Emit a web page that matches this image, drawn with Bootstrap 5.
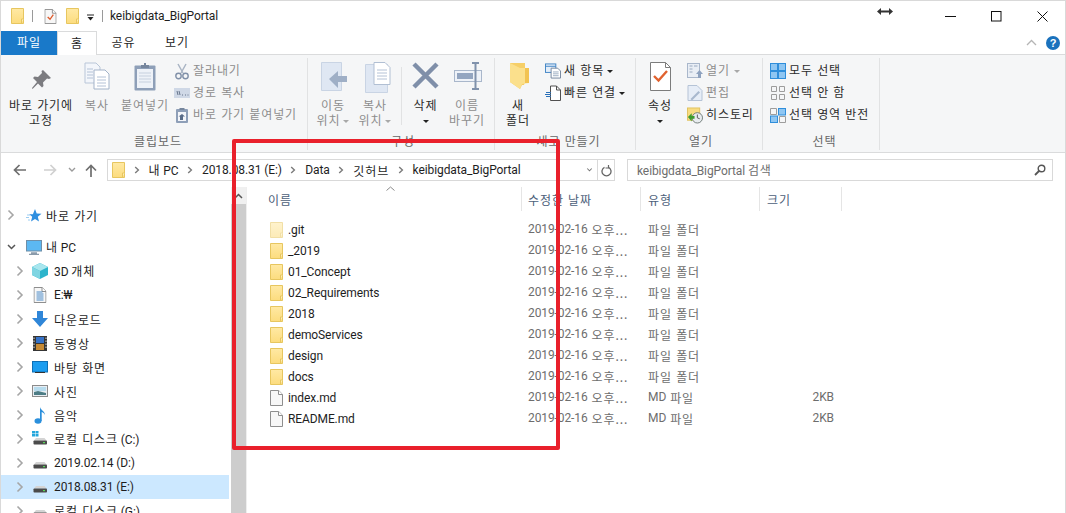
<!DOCTYPE html>
<html lang="ko">
<head>
  <meta charset="UTF-8" />
  <title>keibigdata_BigPortal</title>
  <link href="https://cdn.jsdelivr.net/npm/bootstrap@5.3.3/dist/css/bootstrap.min.css" rel="stylesheet">
  <style>
    html, body { height: 100%; overflow: hidden; background: #fff; }
    body { font-family: Roboto, "Noto Sans CJK KR", sans-serif; font-size: 12px; color: #1e1e1e; line-height: 15px; letter-spacing: -.1px; }
    svg { display: block; flex: none; }
    .ko { font-family: "Noto Sans CJK KR", sans-serif; letter-spacing: .9px; }
    .win { width: 1066px; height: 513px; border: solid #d9d9d9; border-width: 1px 1px 0 1px; overflow: hidden; }

    /* title bar */
    .titlebar { height: 30px; }
    .tb-sep { width: 1px; height: 12px; background: #9a9a9a; }
    .t-folder { margin-left: 10px; }
    .t-sep1 { margin-left: 8px; }
    .t-doc { margin-left: 11px; }
    .t-folder2 { margin-left: 9px; }
    .t-arrow { margin: 3px 0 0 7px; }
    .t-sep2 { margin-left: 7px; }
    .t-name { margin-left: 7px; }
    .win-btn { width: 46px; height: 30px; }
    .cursor-mark { left: 876px; top: 6px; }

    /* tabs */
    .tabs { height: 24px; border-bottom: 1px solid #dadbdc; font-size: 12px; }
    .rb-tab { height: 24px; padding-bottom: 3px; }
    .rb-tab.file { width: 56px; background: #1979c9; color: #fff; }
    .rb-tab.home { width: 40px; background: #fff; border: 1px solid #dadbdc; border-bottom: 0; height: 25px; }
    .rb-tab.share { width: 53px; }
    .rb-tab.view { width: 54px; }
    .tabs-right { margin-left: auto; padding-right: 5px; gap: 9px; }
    .help { width: 14px; height: 14px; border-radius: 50%; background: #1b72bd; color: #fff; font: bold 11px/14px "Liberation Sans", sans-serif; text-align: center; }

    /* ribbon */
    .ribbon { height: 98px; background: #f5f6f7; border-bottom: 1px solid #dadbdc; color: #8d8d8d; }
    .rb-group { height: 92px; margin-top: 3px; border-right: 1px solid #e1e2e3; }
    .g1 { width: 307px; padding-left: 8px; }
    .g2 { width: 187px; padding-left: 4px; }
    .g3 { width: 141px; padding-left: 7px; }
    .g4 { width: 127px; padding-left: 4px; }
    .g5 { width: 117px; padding-left: 7px; }
    .rb-body { height: 75px; }
    .rb-label { height: 17px; text-align: center; color: #666; }
    .big { text-align: center; }
    .big-icon { height: 39px; }
    .pin-ic { margin-bottom: 7px; }
    .w64 { width: 64px; } .w48 { width: 48px; } .w43 { width: 43px; } .w42 { width: 42px; } .w40 { width: 40px; } .w32 { width: 32px; }
    .nudge1 { margin-left: 2px; } .nudge2 { margin-left: 4px; } .nudge3 { margin-left: 6px; }
    .on { color: #2b2b2b; }
    .mini-col { padding-top: 2px; }
    .col-a { margin-left: 5px; }
    .col-b { margin-left: 11px; }
    .col-c { margin-left: 7px; }
    .mini { height: 22px; gap: 3px; white-space: nowrap; }
    .mini > span { margin-bottom: 4px; }
    .mini-ic { width: 16px; }
    .rb-vsep { width: 1px; height: 58px; background: #e1e2e3; margin: 9px 2px 0 5px; }
    .caret-s { display: inline-block; border: 3px solid transparent; border-top: 3px solid currentColor; border-bottom: 0; vertical-align: middle; margin-left: 3px; }
    .caret-k { color: #222; }
    .caret-g { color: #a8a8a8; }

    /* address bar */
    .addr { height: 34px; }
    .nav-ic { width: 106px; padding-left: 12px; }
    .nav-fwd { margin-left: 16px; }
    .nav-drop { margin-left: 11px; }
    .nav-up { margin-left: 9px; }
    .crumbs { width: 490px; height: 22px; border: 1px solid #d9d9d9; border-right: 0; padding-left: 4px; white-space: nowrap; }
    .crumb-gap { margin: 0 9px 0 8.5px; }
    .crumbs-end { margin-left: auto; padding-right: 3px; }
    .refresh { width: 18px; height: 22px; border: 1px solid #d9d9d9; }
    .search { width: 426px; height: 22px; margin-left: 12px; border: 1px solid #d9d9d9; padding: 0 6px 0 9px; color: #6d6d6d; }

    /* main */
    .main { height: 326px; }
    .side { width: 230px; padding-top: 16px; }
    .tree-row { height: 24px; margin-right: 2px; white-space: nowrap; }
    .tree-row.sel { background: #cce8ff; }
    .tree-gap { margin-top: 8px; }
    .lv0 { padding-left: 6px; }
    .lv1 { padding-left: 15px; }
    .tree-ic { width: 16px; margin: 0 6px 0 8px; }
    .lv0 .tree-ic { margin: 0 4px 0 11px; }
    .lv0 .tree-ic.pc { margin-left: 10px; }
    .scroll { width: 15px; background: #f0f0f0; }
    .scroll-up { height: 17px; }
    .scroll-thumb { background: #cdcdcd; }
    .files { border-left: 1px solid #eee; }
    .cols { display: grid; grid-template-columns: 275px 119px 119px 82px; }
    .heads { height: 24px; color: #4c607a; position: relative; }
    .hd { padding-left: 6px; border-right: 1px solid #e5e5e5; }
    .hd.name { padding-left: 21px; }
    .hd.wide { padding-left: 7px; }
    .sort-mark { left: 139px; top: -1px; }
    .file-list { margin-top: 8px; }
    .file-row { height: 21px; color: #6d6d6d; }
    .cell-name { padding-left: 23px; gap: 5px; color: #1e1e1e; }
    .cell-txt { padding-top: 1px; }
    .cell { padding-left: 6px; white-space: nowrap; }
    .cell-t { padding-left: 7px; white-space: nowrap; }
    .cell-size { padding-right: 8px; text-align: right; }
    .faded { opacity: .55; }

    .marker { left: 231px; top: 138px; width: 328px; height: 311px; border: 4px solid #e9202b; border-radius: 2px; pointer-events: none; }
  </style>
</head>
<body class="m-0">

<svg width="0" height="0" class="position-absolute">
  <defs>
    <linearGradient id="fold" x1="0" y1="0" x2="0" y2="1"><stop offset="0" stop-color="#ffe9a4"/><stop offset="1" stop-color="#fcdc7e"/></linearGradient>
    <symbol id="folder" viewBox="0 0 13 16"><path d="M.5.5h12v15H.5z" fill="url(#fold)" stroke="#e7c65f"/><path d="M10.500 15v-4h2" fill="#fff2c4" stroke="#e7c65f"/></symbol>
    <symbol id="doc" viewBox="0 0 13 16"><path d="M.5.5h8.200l3.800 3.800v11.200H.5z" fill="#f7f7f7" stroke="#8e8e8e"/><path d="M8.500.5v4h4" fill="#fff" stroke="#8e8e8e"/></symbol>
    <symbol id="chev" viewBox="0 0 8 12"><path d="M1.500 1.500 6 6l-4.500 4.500" fill="none" stroke="#a6a6a6" stroke-width="1.600"/></symbol>
    <symbol id="crumb" viewBox="0 0 6 8"><path d="M1.200 1 4.400 4 1.200 7" fill="none" stroke="#7b7b7b" stroke-width="1.400"/></symbol>
    <symbol id="drive" viewBox="0 0 16 16"><path d="M2 9.500 4 7h8.500l2 2.500z" fill="#d4d4d4"/><rect x="1.500" y="9.500" width="13.500" height="4" rx=".8" fill="#4b4b4b"/><rect x="11" y="11" width="2" height="1.200" fill="#55d957"/></symbol>
  </defs>
</svg>

<div class="win position-relative d-flex flex-column">

  <!-- title bar -->
  <div class="titlebar d-flex align-items-center">
    <svg class="t-folder" width="13" height="16" aria-hidden="true"><use href="#folder"/></svg>
    <div class="tb-sep t-sep1"></div>
    <svg class="t-doc" width="13" height="15" viewBox="0 0 13 16"><use href="#doc"/><path d="M3.500 8.500 6 11l3.500-5" fill="none" stroke="#dd5a2b" stroke-width="1.400"/></svg>
    <svg class="t-folder2" width="13" height="16"><use href="#folder"/></svg>
    <svg class="t-arrow" width="9" height="8" viewBox="0 0 9 8"><path d="M1 1h7" stroke="#222"/><path d="M1.500 3h6l-3 3.500z" fill="#222"/></svg>
    <div class="tb-sep t-sep2"></div>
    <div class="t-name">keibigdata_BigPortal</div>
    <div class="ms-auto d-flex">
      <div class="win-btn d-flex align-items-center justify-content-center"><svg width="11" height="1"><rect width="11" height="1" fill="#111"/></svg></div>
      <div class="win-btn d-flex align-items-center justify-content-center"><svg width="11" height="11"><rect x=".5" y=".5" width="9.500" height="9.500" fill="none" stroke="#111"/></svg></div>
      <div class="win-btn d-flex align-items-center justify-content-center"><svg width="11" height="11"><path d="M.5.5l10 10M10.500.5l-10 10" stroke="#111"/></svg></div>
    </div>
  </div>
  <svg class="cursor-mark position-absolute" width="16" height="9" viewBox="0 0 16 9"><path d="M0 4.500 4 1v2.500h8V1l4 3.500L12 8V5.500H4V8z" fill="#333"/></svg>

  <!-- tabs -->
  <div class="tabs d-flex">
    <div class="rb-tab file d-flex align-items-center justify-content-center ko">파일</div>
    <div class="rb-tab home d-flex align-items-center justify-content-center ko">홈</div>
    <div class="rb-tab share d-flex align-items-center justify-content-center ko">공유</div>
    <div class="rb-tab view d-flex align-items-center justify-content-center ko">보기</div>
    <div class="tabs-right d-flex align-items-center">
      <svg width="11" height="7" viewBox="0 0 11 7"><path d="M1 6l4.500-4.500L10 6" fill="none" stroke="#b5b5b5" stroke-width="1.300"/></svg>
      <div class="help">?</div>
    </div>
  </div>

  <!-- ribbon -->
  <div class="ribbon d-flex">
    <div class="rb-group g1">
      <div class="rb-body d-flex">
        <div class="big w64 on">
          <div class="big-icon d-flex align-items-end justify-content-center"><svg class="pin-ic" width="21" height="21" viewBox="0 0 21 21"><path d="M12 1l8 8-2 1-2-.500-4 4 .5 3.500-1.500 1.500-4-4-5.500 5.500L1 19l5-6-4-4 1.500-1.500L7 8l4-4-.5-2z" fill="#7c7c80"/></svg></div>
          <div class="ko">바로 가기에<br>고정</div>
        </div>
        <div class="big w48">
          <div class="big-icon d-flex justify-content-center"><svg class="mt-1" width="26" height="28" viewBox="0 0 26 28"><path d="M1 1h11l4 4v16H1z" fill="#f3f6fb" stroke="#b9c6d8"/><path d="M10 8h11l4 4v15H10z" fill="#fff" stroke="#a3b3c9"/><path d="M3 7h6M3 10h6M3 13h6M3 16h6M13 15h9M13 18h9M13 21h9M13 24h9" stroke="#b4c2d6"/></svg></div>
          <div class="ko">복사</div>
        </div>
        <div class="big w48">
          <div class="big-icon d-flex justify-content-center"><svg class="mt-1" width="22" height="29" viewBox="0 0 22 29"><rect x=".5" y="3.500" width="21" height="25" rx="1" fill="#8e9fb8"/><rect x="3" y="7" width="16" height="19" fill="#eef2f8"/><path d="M5 11h12M5 14h12M5 17h12M5 20h12" stroke="#c6d0de"/><path d="M7 6V3h3V1h2v2h3v3z" fill="#76869d"/></svg></div>
          <div class="ko">붙여넣기</div>
        </div>
        <div class="mini-col col-a">
          <div class="mini d-flex align-items-center"><svg class="mini-ic" width="16" height="17" viewBox="0 0 16 17"><path d="M4 1l5 9M12 1l-5 9" stroke="#a9b4c4" stroke-width="1.500"/><circle cx="4.500" cy="13" r="2.700" fill="none" stroke="#8090a8" stroke-width="1.400"/><circle cx="11.500" cy="13" r="2.700" fill="none" stroke="#8090a8" stroke-width="1.400"/></svg><span class="ko">잘라내기</span></div>
          <div class="mini d-flex align-items-center"><svg class="mini-ic" width="16" height="10" viewBox="0 0 16 10"><rect width="16" height="10" fill="#cfd8e6"/><path d="M3 3l1 4M5 3l1 4M8 7h1M11 7h1M13.500 7h1" stroke="#66758c"/></svg><span class="ko">경로 복사</span></div>
          <div class="mini d-flex align-items-center"><svg class="mini-ic" width="16" height="16" viewBox="0 0 16 16"><rect x="2" y="2" width="12" height="14" rx="1" fill="#8e9fb8"/><rect x="4" y="5" width="8" height="9" fill="#f4f6fa"/><path d="M5.500 3V1h5v2z" fill="#76869d"/><path d="M6 13V9.500h-1.500L8 7l3 2.500H9V13z" fill="#5a6d88"/></svg><span class="ko">바로 가기 붙여넣기</span></div>
        </div>
      </div>
      <div class="rb-label ko">클립보드</div>
    </div>

    <div class="rb-group g2">
      <div class="rb-body d-flex">
        <div class="big w42">
          <div class="big-icon d-flex justify-content-center"><svg class="mt-1 nudge1" width="27" height="30" viewBox="0 0 27 30"><path d="M.5.500h20v28H.5z" fill="#dfe7f3" stroke="#c9d4e4"/><path d="M26 14h-9V9l-9 8 9 9v-6h9z" fill="#9fafc6"/></svg></div>
          <div class="ko">이동<br>위치<span class="caret-s caret-g"></span></div>
        </div>
        <div class="big w42">
          <div class="big-icon d-flex justify-content-center"><svg class="mt-1 nudge3" width="26" height="31" viewBox="0 0 26 31"><path d="M.5 2.500h22v28H.5z" fill="#dfe7f3" stroke="#c9d4e4"/><path d="M9 .5h11l5 5v17H9z" fill="#fff" stroke="#b1bfd3"/><path d="M12 8h10M12 11h10M12 14h10M12 17h10" stroke="#b4c2d6"/></svg></div>
          <div class="ko">복사<br>위치<span class="caret-s caret-g"></span></div>
        </div>
        <div class="rb-vsep"></div>
        <div class="big w43 on">
          <div class="big-icon d-flex justify-content-center"><svg class="mt-1" width="27" height="27" viewBox="0 0 27 27"><path d="M2 2l23 23M25 2L2 25" stroke="#7f8fa9" stroke-width="4.500"/></svg></div>
          <div class="ko">삭제<br><span class="caret-s caret-k m-0"></span></div>
        </div>
        <div class="big w40">
          <div class="big-icon d-flex justify-content-center"><svg class="mt-1 nudge1" width="29" height="28" viewBox="0 0 29 28"><rect x=".5" y="8.500" width="27" height="11" fill="#eef2f8" stroke="#a9b7cb"/><rect x="3" y="11" width="16" height="6" fill="#93a5c0"/><path d="M18 1h7M18 27h7M21.500 1v26" stroke="#8092ac" stroke-width="2"/></svg></div>
          <div class="ko">이름<br>바꾸기</div>
        </div>
      </div>
      <div class="rb-label ko">구성</div>
    </div>

    <div class="rb-group g3">
      <div class="rb-body d-flex">
        <div class="big w32 on">
          <div class="big-icon d-flex justify-content-center"><svg class="mt-1 nudge1" width="21" height="28" viewBox="0 0 21 28"><path d="M1 1h15v19l-1 3-2 0-2 4-10-7z" fill="#f6cf68"/><path d="M1 1l10 5 9 0v15l-7 1-2 5-10-7z" fill="#fbe08c"/><path d="M16 1v5h4v15h-4z" fill="#f2c351"/></svg></div>
          <div class="ko">새<br>폴더</div>
        </div>
        <div class="mini-col col-b on">
          <div class="mini d-flex align-items-center"><svg class="mini-ic" width="17" height="16" viewBox="0 0 17 16"><rect x=".5" y=".5" width="11" height="9" fill="#e4eef9" stroke="#3f83c4"/><path d="M.5 3h11" stroke="#3f83c4"/><path d="M6.500 5h7l3 3v7.500h-10z" fill="#fff" stroke="#71839c"/><path d="M8.500 9h6M8.500 11h6M8.500 13h6" stroke="#9aabc0"/></svg><span class="ko">새 항목<span class="caret-s caret-k"></span></span></div>
          <div class="mini d-flex align-items-center"><svg class="mini-ic" width="16" height="16" viewBox="0 0 16 16"><path d="M5.500 1h6l4 4v10.500h-10z" fill="#fff" stroke="#505050"/><path d="M11.500 1v4h4" fill="none" stroke="#505050"/><path d="M1 7.500h5M0 9.500h6M1 11.500h5" stroke="#2a70b8"/></svg><span class="ko">빠른 연결<span class="caret-s caret-k"></span></span></div>
        </div>
      </div>
      <div class="rb-label ko">새로 만들기</div>
    </div>

    <div class="rb-group g4">
      <div class="rb-body d-flex">
        <div class="big w40 on">
          <div class="big-icon d-flex justify-content-center"><svg class="mt-1" width="21" height="29" viewBox="0 0 21 29"><path d="M.5.5h15l5 5v23H.5z" fill="#fff" stroke="#7c7c7c"/><path d="M15.500.5v5h5" fill="none" stroke="#7c7c7c"/><path d="M4 14l4.500 4.500L17 9" fill="none" stroke="#e0622f" stroke-width="2.400"/></svg></div>
          <div class="ko">속성<br><span class="caret-s caret-k m-0"></span></div>
        </div>
        <div class="mini-col col-c">
          <div class="mini d-flex align-items-center"><svg class="mini-ic" width="16" height="16" viewBox="0 0 16 16"><rect x=".5" y=".5" width="12" height="14" fill="#e9eef5" stroke="#a9b7cb"/><path d="M2.500 3h3M7 3h3.500M2.500 6h3M2.500 9h3" stroke="#9aaac0"/><path d="M11 15v-4H9l3.500-4 3.500 4h-2v4z" fill="#8ea2bf"/></svg><span class="ko">열기<span class="caret-s caret-g ms-1"></span></span></div>
          <div class="mini d-flex align-items-center"><svg class="mini-ic" width="15" height="16" viewBox="0 0 15 16"><path d="M.5.5h9l5 5v10H.5z" fill="#e6edf7" stroke="#b5c3d6"/><path d="M3 14l8-8 1.500 1.500-8 8z" fill="#a8b8ce"/></svg><span class="ko">편집</span></div>
          <div class="mini d-flex align-items-center on"><svg class="mini-ic" width="17" height="17" viewBox="0 0 17 17"><rect x=".5" y=".5" width="13" height="13" fill="#f8dc80" stroke="#e0c15d"/><circle cx="11" cy="11" r="5.500" fill="#e8ecef" stroke="#6f7b78"/><path d="M11 7.500V11l2.500 1" stroke="#555" fill="none"/><path d="M1 10l4-4v3h3v3H5v3z" fill="#3c9b2e"/></svg><span class="ko">히스토리</span></div>
        </div>
      </div>
      <div class="rb-label ko">열기</div>
    </div>

    <div class="rb-group g5">
      <div class="rb-body">
        <div class="mini-col on">
          <div class="mini d-flex align-items-center"><svg class="mini-ic" width="16" height="16" viewBox="0 0 16 16"><rect width="16" height="16" fill="#2f8edb"/><rect x="1" y="1" width="6" height="6" fill="#8fc6f2"/><rect x="9" y="1" width="6" height="6" fill="#8fc6f2"/><rect x="1" y="9" width="6" height="6" fill="#8fc6f2"/><rect x="9" y="9" width="6" height="6" fill="#8fc6f2"/></svg><span class="ko">모두 선택</span></div>
          <div class="mini d-flex align-items-center"><svg class="mini-ic" width="16" height="14" viewBox="0 0 16 14"><path d="M1.500.5h5v5h-5zM9.500.5h5v5h-5zM1.500 8.500h5v5h-5zM9.500 8.500h5v5h-5z" fill="none" stroke="#9d9d9d"/></svg><span class="ko">선택 안 함</span></div>
          <div class="mini d-flex align-items-center"><svg class="mini-ic" width="16" height="15" viewBox="0 0 16 15"><path d="M.5.500h6v6h-6zM9.500 8.500h6v6h-6z" fill="none" stroke="#9d9d9d"/><rect x="8.500" y=".5" width="7" height="6.500" fill="#8fc6f2" stroke="#2f8edb"/><rect x=".5" y="8" width="7" height="6.500" fill="#8fc6f2" stroke="#2f8edb"/></svg><span class="ko">선택 영역 반전</span></div>
        </div>
      </div>
      <div class="rb-label ko">선택</div>
    </div>
  </div>

  <!-- address bar -->
  <div class="addr d-flex align-items-center">
    <div class="nav-ic d-flex align-items-center">
      <svg width="14" height="12" viewBox="0 0 14 12"><path d="M13 6H2M6.500 1 1.500 6l5 5" fill="none" stroke="#6f6f6f" stroke-width="1.700"/></svg>
      <svg class="nav-fwd" width="14" height="12" viewBox="0 0 14 12"><path d="M1 6h11M7.500 1l5 5-5 5" fill="none" stroke="#d0d0d0" stroke-width="1.700"/></svg>
      <svg class="nav-drop" width="8" height="6" viewBox="0 0 8 6"><path d="M1 1l3 3 3-3" fill="none" stroke="#9a9a9a" stroke-width="1.400"/></svg>
      <svg class="nav-up" width="12" height="13" viewBox="0 0 12 13"><path d="M6 13V2M1 6.500l5-5 5 5" fill="none" stroke="#6f6f6f" stroke-width="1.700"/></svg>
    </div>
    <div class="crumbs d-flex align-items-center">
      <svg width="13" height="16"><use href="#folder"/></svg>
      <svg class="crumb-gap" width="6" height="8"><use href="#crumb"/></svg><span><span class="ko">내</span> PC</span>
      <svg class="crumb-gap" width="6" height="8"><use href="#crumb"/></svg><span>2018.08.31 (E:)</span>
      <svg class="crumb-gap" width="6" height="8"><use href="#crumb"/></svg><span>Data</span>
      <svg class="crumb-gap" width="6" height="8"><use href="#crumb"/></svg><span class="ko">깃허브</span>
      <svg class="crumb-gap" width="6" height="8"><use href="#crumb"/></svg><span>keibigdata_BigPortal</span>
      <svg class="crumbs-end" width="12" height="6" viewBox="0 0 12 6"><path d="M3 1l3 3 3-3" fill="none" stroke="#777" stroke-width="1.400"/></svg>
    </div>
    <div class="refresh d-flex align-items-center justify-content-center"><svg width="11" height="13" viewBox="0 0 11 13"><path d="M3.500 3.300A4.500 4.500 0 1 0 7.500 3.300" fill="none" stroke="#666" stroke-width="1.300"/><path d="M7.500 1v3H4.500" fill="none" stroke="#666" stroke-width="1.200"/></svg></div>
    <div class="search d-flex align-items-center justify-content-between"><span>keibigdata_BigPortal <span class="ko">검색</span></span><svg width="12" height="12" viewBox="0 0 12 12"><circle cx="7.500" cy="4.500" r="3.300" fill="none" stroke="#555" stroke-width="1.400"/><path d="M5 7l-4 4" stroke="#555" stroke-width="1.800"/></svg></div>
  </div>

  <!-- main -->
  <div class="main d-flex">
    <div class="side">
      <div class="tree-row lv0 d-flex align-items-center"><svg width="8" height="12"><use href="#chev"/></svg><svg class="tree-ic" width="16" height="15" viewBox="0 0 16 15"><path d="M9 1l1.700 4.400 4.800.3-3.700 3 1.200 4.800L9 11l-4 2.500 1.200-4.800-3-2.400h3.700z" fill="#2f8fe0"/><path d="M1 7h3M0 9.500h3M2 12h2" stroke="#9ccdf2"/></svg><span class="ko">바로 가기</span></div>
      <div class="tree-row lv0 tree-gap d-flex align-items-center"><svg width="9" height="6" viewBox="0 0 9 6"><path d="M1 1l3.500 3.500L8 1" fill="none" stroke="#555" stroke-width="1.500"/></svg><svg class="tree-ic pc" width="16" height="15" viewBox="0 0 16 15"><rect x=".5" y=".5" width="15" height="10.500" fill="#5cb8f2" stroke="#6f8fa8"/><path d="M5 13h6M3 14.500h10" stroke="#8a9bab" stroke-width="1.300"/></svg><span><span class="ko">내</span> PC</span></div>
      <div class="tree-row lv1 d-flex align-items-center"><svg width="8" height="12"><use href="#chev"/></svg><svg class="tree-ic" width="16" height="16" viewBox="0 0 16 16"><path d="M8 0l8 4v8l-8 4-8-4V4z" fill="#2cb4cb"/><path d="M0 4l8 4 8-4-8-4z" fill="#a8e6ee"/><path d="M0 4l8 4v8l-8-4z" fill="#7fd5e2"/></svg><span>3D <span class="ko">개체</span></span></div>
      <div class="tree-row lv1 d-flex align-items-center"><svg width="8" height="12"><use href="#chev"/></svg><svg class="tree-ic" width="13" height="16" viewBox="0 0 13 16"><use href="#doc"/><path d="M3 5h6M3 7h7M3 9h7M3 11h7M3 13h7" stroke="#4a8ac7"/></svg><span>E:₩</span></div>
      <div class="tree-row lv1 d-flex align-items-center"><svg width="8" height="12"><use href="#chev"/></svg><svg class="tree-ic" width="16" height="16" viewBox="0 0 16 16"><path d="M5 0h6v7h5l-8 9-8-9h5z" fill="#2f86d8"/></svg><span class="ko">다운로드</span></div>
      <div class="tree-row lv1 d-flex align-items-center"><svg width="8" height="12"><use href="#chev"/></svg><svg class="tree-ic" width="14" height="15" viewBox="0 0 14 15"><rect width="14" height="15" fill="#353535"/><rect x="3" y="1" width="8" height="6" fill="#3572c8"/><rect x="3" y="8" width="8" height="6" fill="#c78a35"/><path d="M1 1.500v12M13 1.500v12" stroke="#ddd" stroke-dasharray="1.500 1.500"/></svg><span class="ko">동영상</span></div>
      <div class="tree-row lv1 d-flex align-items-center"><svg width="8" height="12"><use href="#chev"/></svg><svg class="tree-ic" width="16" height="12" viewBox="0 0 16 12"><rect x=".5" y=".5" width="15" height="10.500" fill="#1b9df0" stroke="#0d6fb5"/><path d="M3 11.500h10" stroke="#333"/></svg><span class="ko">바탕 화면</span></div>
      <div class="tree-row lv1 d-flex align-items-center"><svg width="8" height="12"><use href="#chev"/></svg><svg class="tree-ic" width="16" height="12" viewBox="0 0 16 12"><rect x=".5" y=".5" width="15" height="11" fill="#e9eef3" stroke="#8b8b8b"/><rect x="2" y="2" width="12" height="4" fill="#b7dcee"/><path d="M2 10V7l4-1 8 2v2z" fill="#4d7d86"/></svg><span class="ko">사진</span></div>
      <div class="tree-row lv1 d-flex align-items-center"><svg width="8" height="12"><use href="#chev"/></svg><svg class="tree-ic" width="13" height="17" viewBox="0 0 13 17"><ellipse cx="4.500" cy="14" rx="3.500" ry="2.700" fill="#2a8fdc"/><path d="M6.500 14V0c.5 3 5 4 5 8-.6-2-3-3-3.300-3V14z" fill="#2a8fdc"/></svg><span class="ko">음악</span></div>
      <div class="tree-row lv1 d-flex align-items-center"><svg width="8" height="12"><use href="#chev"/></svg><svg class="tree-ic" width="16" height="16" viewBox="0 0 16 16"><use href="#drive"/><path d="M0 0h3v2.500H0zM3.500 0h3v2.500h-3zM0 3h3v2.500H0zM3.500 3h3v2.500h-3z" fill="#23a6dc"/></svg><span><span class="ko">로컬 디스크</span> (C:)</span></div>
      <div class="tree-row lv1 d-flex align-items-center"><svg width="8" height="12"><use href="#chev"/></svg><svg class="tree-ic" width="16" height="16"><use href="#drive"/></svg><span>2019.02.14 (D:)</span></div>
      <div class="tree-row lv1 sel d-flex align-items-center"><svg width="8" height="12"><use href="#chev"/></svg><svg class="tree-ic" width="16" height="16"><use href="#drive"/></svg><span>2018.08.31 (E:)</span></div>
      <div class="tree-row lv1 d-flex align-items-center"><svg width="8" height="12"><use href="#chev"/></svg><svg class="tree-ic" width="16" height="16"><use href="#drive"/></svg><span><span class="ko">로컬 디스크</span> (G:)</span></div>
    </div>

    <div class="scroll d-flex flex-column">
      <div class="scroll-up d-flex align-items-center justify-content-center"><svg width="9" height="6" viewBox="0 0 9 6"><path d="M1 5l3.500-3.500L8 5" fill="none" stroke="#555" stroke-width="1.500"/></svg></div>
      <div class="scroll-thumb flex-grow-1"></div>
    </div>

    <div class="files flex-grow-1">
      <div class="heads cols">
        <div class="hd name d-flex align-items-center ko">이름</div>
        <div class="hd d-flex align-items-center ko">수정한 날짜</div>
        <div class="hd wide d-flex align-items-center ko">유형</div>
        <div class="hd wide d-flex align-items-center ko">크기</div>
        <svg class="sort-mark position-absolute" width="9" height="5" viewBox="0 0 9 5"><path d="M.5 4.500l4-3.500 4 3.500" fill="none" stroke="#8a8a8a"/></svg>
      </div>
      <div class="file-list">
        <div class="file-row cols"><div class="cell-name d-flex align-items-center"><svg class="faded" width="13" height="16"><use href="#folder"/></svg><span class="cell-txt">.git</span></div><div class="cell d-flex align-items-center">2019-02-16 <span class="ko ms-1">오후...</span></div><div class="cell-t d-flex align-items-center ko">파일 폴더</div><div></div></div>
        <div class="file-row cols"><div class="cell-name d-flex align-items-center"><svg width="13" height="16"><use href="#folder"/></svg><span class="cell-txt">_2019</span></div><div class="cell d-flex align-items-center">2019-02-16 <span class="ko ms-1">오후...</span></div><div class="cell-t d-flex align-items-center ko">파일 폴더</div><div></div></div>
        <div class="file-row cols"><div class="cell-name d-flex align-items-center"><svg width="13" height="16"><use href="#folder"/></svg><span class="cell-txt">01_Concept</span></div><div class="cell d-flex align-items-center">2019-02-16 <span class="ko ms-1">오후...</span></div><div class="cell-t d-flex align-items-center ko">파일 폴더</div><div></div></div>
        <div class="file-row cols"><div class="cell-name d-flex align-items-center"><svg width="13" height="16"><use href="#folder"/></svg><span class="cell-txt">02_Requirements</span></div><div class="cell d-flex align-items-center">2019-02-16 <span class="ko ms-1">오후...</span></div><div class="cell-t d-flex align-items-center ko">파일 폴더</div><div></div></div>
        <div class="file-row cols"><div class="cell-name d-flex align-items-center"><svg width="13" height="16"><use href="#folder"/></svg><span class="cell-txt">2018</span></div><div class="cell d-flex align-items-center">2019-02-16 <span class="ko ms-1">오후...</span></div><div class="cell-t d-flex align-items-center ko">파일 폴더</div><div></div></div>
        <div class="file-row cols"><div class="cell-name d-flex align-items-center"><svg width="13" height="16"><use href="#folder"/></svg><span class="cell-txt">demoServices</span></div><div class="cell d-flex align-items-center">2019-02-16 <span class="ko ms-1">오후...</span></div><div class="cell-t d-flex align-items-center ko">파일 폴더</div><div></div></div>
        <div class="file-row cols"><div class="cell-name d-flex align-items-center"><svg width="13" height="16"><use href="#folder"/></svg><span class="cell-txt">design</span></div><div class="cell d-flex align-items-center">2019-02-16 <span class="ko ms-1">오후...</span></div><div class="cell-t d-flex align-items-center ko">파일 폴더</div><div></div></div>
        <div class="file-row cols"><div class="cell-name d-flex align-items-center"><svg width="13" height="16"><use href="#folder"/></svg><span class="cell-txt">docs</span></div><div class="cell d-flex align-items-center">2019-02-16 <span class="ko ms-1">오후...</span></div><div class="cell-t d-flex align-items-center ko">파일 폴더</div><div></div></div>
        <div class="file-row cols"><div class="cell-name d-flex align-items-center"><svg width="13" height="16"><use href="#doc"/></svg><span class="cell-txt">index.md</span></div><div class="cell d-flex align-items-center">2019-02-16 <span class="ko ms-1">오후...</span></div><div class="cell-t d-flex align-items-center">MD <span class="ko ms-1">파일</span></div><div class="cell-size d-flex align-items-center justify-content-end">2KB</div></div>
        <div class="file-row cols"><div class="cell-name d-flex align-items-center"><svg width="13" height="16"><use href="#doc"/></svg><span class="cell-txt">README.md</span></div><div class="cell d-flex align-items-center">2019-02-16 <span class="ko ms-1">오후...</span></div><div class="cell-t d-flex align-items-center">MD <span class="ko ms-1">파일</span></div><div class="cell-size d-flex align-items-center justify-content-end">2KB</div></div>
      </div>
    </div>
  </div>

  <div class="marker position-absolute"></div>
</div>

<script src="https://cdn.jsdelivr.net/npm/bootstrap@5.3.3/dist/js/bootstrap.bundle.min.js"></script>
</body>
</html>
